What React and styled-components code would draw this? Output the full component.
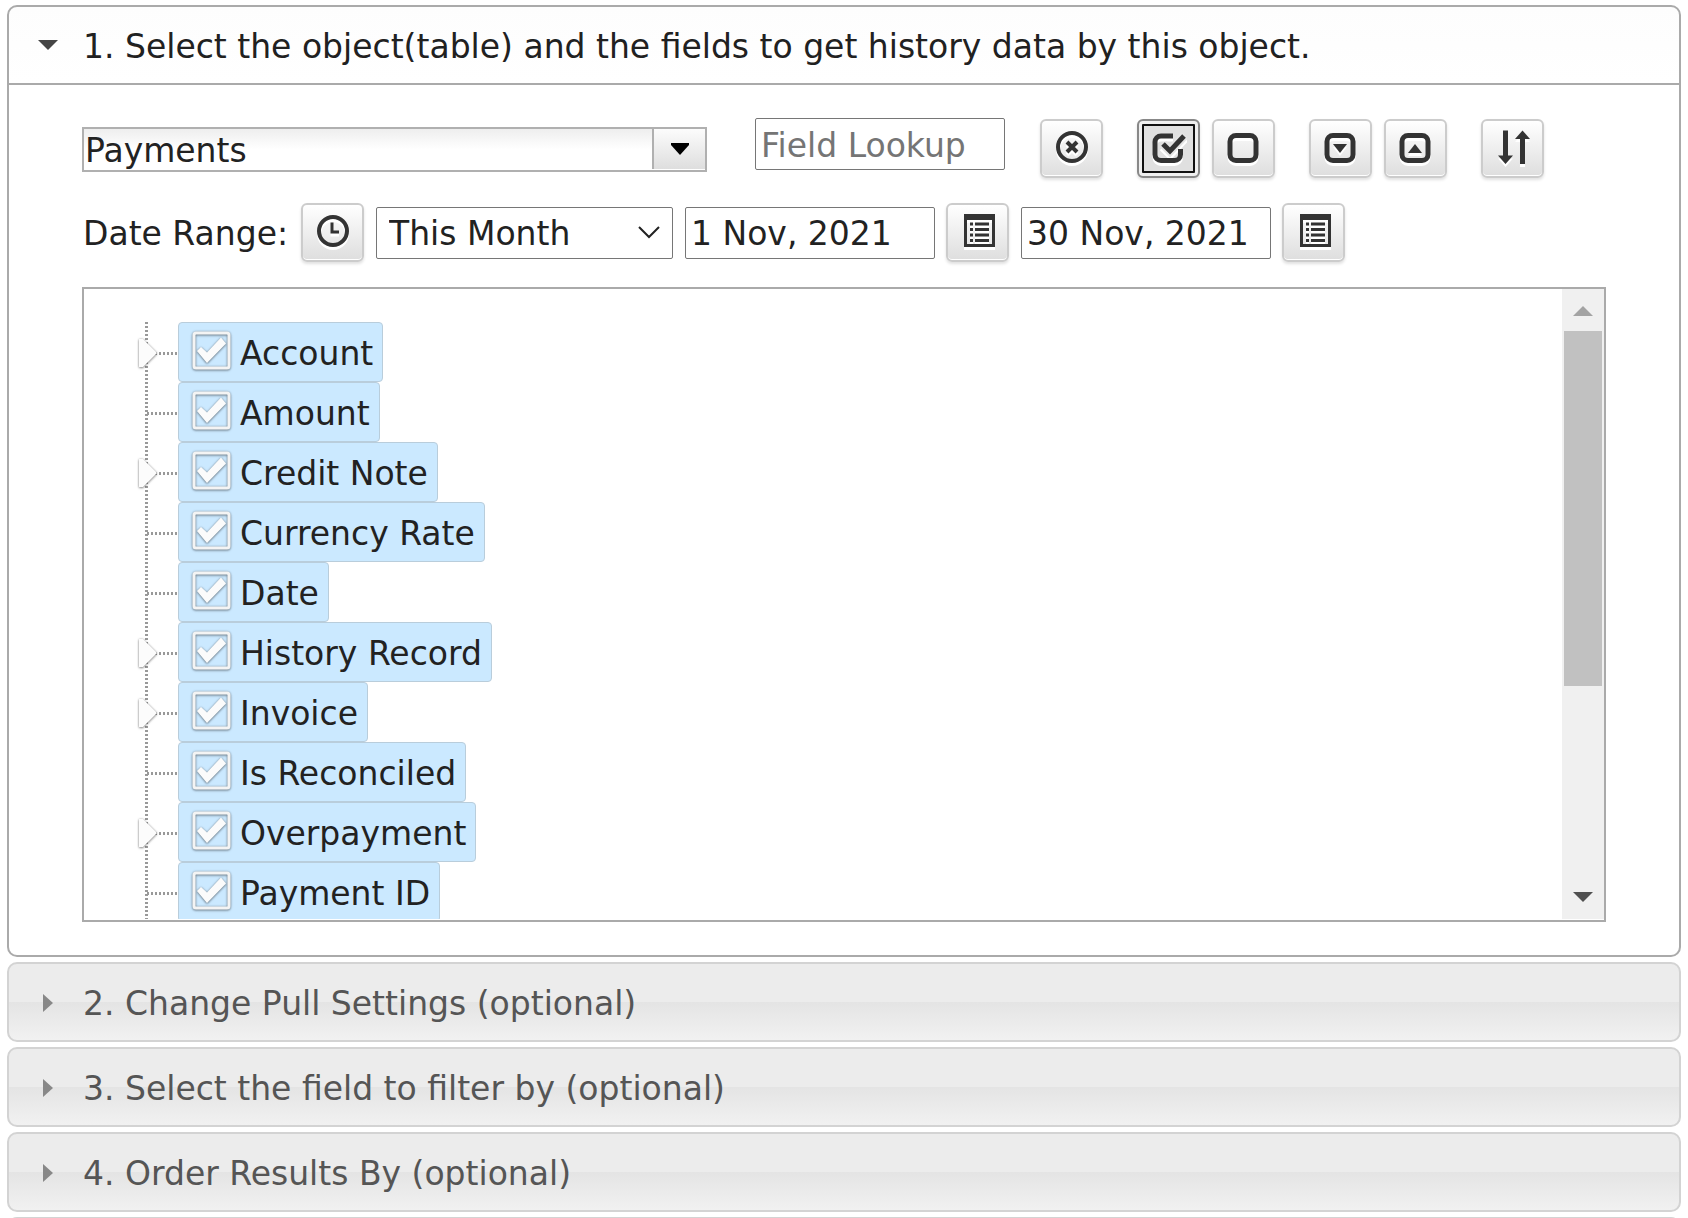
import { useState } from 'react';
import styled, { createGlobalStyle } from 'styled-components';

const FIELDS = [
    { name: 'Account', children: true },
    { name: 'Amount' },
    { name: 'Credit Note', children: true },
    { name: 'Currency Rate' },
    { name: 'Date' },
    { name: 'History Record', children: true },
    { name: 'Invoice', children: true },
    { name: 'Is Reconciled' },
    { name: 'Overpayment', children: true },
    { name: 'Payment ID' },
];

const SECTIONS = [
    '2. Change Pull Settings (optional)',
    '3. Select the field to filter by (optional)',
    '4. Order Results By (optional)',
];

function BoxOutline(){
    return <rect x="4" y="6.5" width="26" height="25" rx="6" fill="none" stroke="#333" strokeWidth="5"/>;
}

const icons = {
    clear: (
        <>
            <circle cx="18" cy="18" r="14" fill="none" stroke="#333" strokeWidth="4"/>
            <path d="M13 13l10 10M23 13l-10 10" stroke="#333" strokeWidth="4"/>
        </>
    ),
    checkAll: (
        <>
            <path d="M22 7H10a6 6 0 0 0-6 6v12.500a6 6 0 0 0 6 6h13.500a6 6 0 0 0 6-6V20" fill="none" stroke="#333" strokeWidth="5"/>
            <path d="M12 15l7 7L34 6" fill="none" stroke="#e4e4e4" strokeWidth="9"/>
            <path d="M12 15l7 7L33 7" fill="none" stroke="#333" strokeWidth="5"/>
        </>
    ),
    uncheckAll: <BoxOutline/>,
    expand: (
        <>
            <BoxOutline/>
            <path d="M10 15h14l-7 9z" fill="#333"/>
        </>
    ),
    collapse: (
        <>
            <BoxOutline/>
            <path d="M10 24h14l-7-9z" fill="#333"/>
        </>
    ),
    sort: (
        <>
            <path d="M8 1.500h5v25h5l-7.500 8.500L3 26.500h5z" fill="#333"/>
            <path d="M25 35h5V10h5l-7.500-8.500L20 10h5z" fill="#333"/>
        </>
    ),
    clock: (
        <>
            <circle cx="18" cy="18" r="14" fill="none" stroke="#333" strokeWidth="4"/>
            <path d="M17 9.500V19h7" fill="none" stroke="#333" strokeWidth="3"/>
        </>
    ),
    calendar: (
        <>
            <path fillRule="evenodd" d="M4 1h31v33H4zM7 7v24h25V7z" fill="#333"/>
            <path d="M10 11h3M10 16.500h3M10 22h3M10 27.500h3M15 11h14M15 16.500h14M15 22h14M15 27.500h14" stroke="#333" strokeWidth="3"/>
        </>
    ),
};

function ToolButton({ icon, label, active }){
    return (
        <IconButton type="button" aria-label={label} $active={active}>
            <svg width="36" height="36" viewBox="0 0 36 36">{icons[icon]}</svg>
        </IconButton>
    );
}

function CheckIcon(){
    return (
        <SoftIcon width="42" height="42" viewBox="0 0 42 42">
            <rect x="3" y="3" width="35" height="35" rx="2" fill="none" stroke="#f4f4f4" strokeWidth="3"/>
            <path d="M6 21l4-4 6 5.500L30 7.500l5 6-19 19.500z" fill="#fbfbfb"/>
        </SoftIcon>
    );
}

function TreeItem({ field }){
    const [checked, setChecked] = useState(true);

    return (
        <Item>
            <Branch>
                {field.children &&
                    <Toggle type="button" aria-label={`Expand ${field.name}`}>
                        <SoftIcon width="20" height="32" viewBox="0 0 20 32">
                            <path d="M0 2h4l14 14L4 30H0z" fill="#fcfcfc"/>
                        </SoftIcon>
                    </Toggle>
                }
            </Branch>
            <Node $selected={checked}>
                <HiddenCheck type="checkbox" checked={checked} onChange={() => setChecked(!checked)}/>
                <CheckIcon/>
                <span>{field.name}</span>
            </Node>
        </Item>
    );
}

function DateField({ label, value }){
    return (
        <DateGroup>
            <TextInput aria-label={label} defaultValue={value}/>
            <ToolButton icon="calendar" label={`Pick ${label}`}/>
        </DateGroup>
    );
}

export default function App(){
    return (
        <>
            <GlobalStyle/>
            <Accordion>
                <Panel>
                    <PanelHeader type="button" aria-expanded="true" $open>
                        <Marker>
                            <svg width="20" height="12" viewBox="0 0 20 12"><path d="M0 0h20L10 10z" fill="#454545"/></svg>
                        </Marker>
                        1. Select the object(table) and the fields to get history data by this object.
                    </PanelHeader>
                    <PanelBody>
                        <Toolbar>
                            <Combo>
                                <ComboSelect aria-label="Object" defaultValue="Payments">
                                    <option>Payments</option>
                                </ComboSelect>
                                <ComboTrigger>
                                    <svg width="18" height="12" viewBox="0 0 18 12"><path d="M0 0h18v2l-9 10L0 2z" fill="#000"/></svg>
                                </ComboTrigger>
                            </Combo>
                            <TextInput type="text" aria-label="Field Lookup" placeholder="Field Lookup"/>
                            <ButtonGroups>
                                <ButtonGroup>
                                    <ToolButton icon="clear" label="Clear lookup"/>
                                </ButtonGroup>
                                <ButtonGroup>
                                    <ToolButton icon="checkAll" label="Check all" active/>
                                    <ToolButton icon="uncheckAll" label="Uncheck all"/>
                                </ButtonGroup>
                                <ButtonGroup>
                                    <ToolButton icon="expand" label="Expand all"/>
                                    <ToolButton icon="collapse" label="Collapse all"/>
                                </ButtonGroup>
                                <ButtonGroup>
                                    <ToolButton icon="sort" label="Sort fields"/>
                                </ButtonGroup>
                            </ButtonGroups>
                        </Toolbar>
                        <DateBar>
                            <RangeLabel htmlFor="range">Date Range:</RangeLabel>
                            <ToolButton icon="clock" label="Date range type"/>
                            <RangeBox>
                                <RangeSelect id="range" defaultValue="This Month">
                                    <option>This Month</option>
                                </RangeSelect>
                                <Chevron width="22" height="14" viewBox="0 0 22 14">
                                    <path d="M1 1l10 10L21 1" fill="none" stroke="#222" strokeWidth="2"/>
                                </Chevron>
                            </RangeBox>
                            <DateField label="start date" value="1 Nov, 2021"/>
                            <DateField label="end date" value="30 Nov, 2021"/>
                        </DateBar>
                        <TreeBox>
                            <Tree>
                                {FIELDS.map((field) => <TreeItem field={field} key={field.name}/>)}
                            </Tree>
                            <Scrollbar>
                                <ScrollButton type="button" aria-label="Scroll up">
                                    <svg width="20" height="10" viewBox="0 0 20 10"><path d="M0 10L10 0l10 10z" fill="#a3a3a3"/></svg>
                                </ScrollButton>
                                <Track><Thumb/></Track>
                                <ScrollButton type="button" aria-label="Scroll down" $down>
                                    <svg width="20" height="10" viewBox="0 0 20 10"><path d="M0 0h20L10 10z" fill="#505050"/></svg>
                                </ScrollButton>
                            </Scrollbar>
                        </TreeBox>
                    </PanelBody>
                </Panel>
                {SECTIONS.map((title) => (
                    <PanelHeader type="button" aria-expanded="false" key={title}>
                        <Marker>
                            <svg width="12" height="18" viewBox="0 0 12 18"><path d="M1 0l10 9L1 18z" fill="#888"/></svg>
                        </Marker>
                        {title}
                    </PanelHeader>
                ))}
                <PanelHeader as="div"/>
            </Accordion>
        </>
    );
}

const GlobalStyle = createGlobalStyle`
    * {
        box-sizing: border-box;
    }

    body {
        margin: 0;
        background: #fff;
    }

    body, button, input, select {
        font-family: Verdana, 'DejaVu Sans', sans-serif;
        font-size: 33px;
        color: #222;
    }
`;

const Accordion = styled.div`
    display: flex;
    flex-direction: column;
    gap: 5px;
    height: 100vh;
    padding: 5px 7px 0;
    overflow: hidden;
`;

const Panel = styled.section`
    display: flex;
    flex-direction: column;
    flex-shrink: 0;
`;

const PanelHeader = styled.button`
    display: flex;
    align-items: center;
    flex-shrink: 0;
    width: 100%;
    height: 80px;
    padding: 2px 0 0;
    border: 2px solid ${({ $open }) => $open ? '#aaa' : '#d3d3d3'};
    border-radius: ${({ $open }) => $open ? '10px 10px 0 0' : '10px'};
    background: ${({ $open }) => $open
        ? 'linear-gradient(#fdfdfd, #fff)'
        : 'linear-gradient(#ececec 50%, #e4e4e4 50%, #f1f1f1)'};
    color: ${({ $open }) => $open ? '#212121' : '#555'};
    text-align: left;
    white-space: nowrap;
    cursor: pointer;
`;

const Marker = styled.span`
    display: flex;
    justify-content: center;
    width: 74px;
    padding-left: 4px;
`;

const PanelBody = styled.div`
    display: flex;
    flex-direction: column;
    gap: 25px;
    padding: 33px 73px;
    border: 2px solid #aaa;
    border-top: 0;
    border-radius: 0 0 10px 10px;
`;

const Toolbar = styled.div`
    display: flex;
    align-items: flex-start;
`;

const Combo = styled.div`
    display: grid;
    grid-template-columns: 1fr 53px;
    width: 625px;
    height: 45px;
    margin: 9px 48px 0 0;
    border: 2px solid #b0b0b0;
    background: linear-gradient(#eee, #fff 50%);
`;

const ComboSelect = styled.select`
    grid-area: 1 / 1 / 2 / 3;
    appearance: none;
    height: 41px;
    padding: 2px 0 0 1px;
    border: 0;
    background: transparent;
`;

const ComboTrigger = styled.span`
    grid-area: 1 / 2 / 2 / 3;
    display: flex;
    align-items: center;
    justify-content: center;
    margin-bottom: 1px;
    border-left: 2px solid #b0b0b0;
    background: linear-gradient(#fcfcfc, #dedede);
    pointer-events: none;
`;

const TextInput = styled.input`
    width: 250px;
    height: 52px;
    padding: 2px 5px 0;
    border: 1px solid #767676;
    border-radius: 2px;
    background: #fff;

    &::placeholder {
        color: #757575;
    }
`;

const ButtonGroups = styled.div`
    display: flex;
    gap: 34px;
    margin: 1px 0 0 35px;
`;

const ButtonGroup = styled.div`
    display: flex;
    gap: 12px;
`;

const IconButton = styled.button`
    display: flex;
    align-items: center;
    justify-content: center;
    width: 63px;
    height: 59px;
    padding: 0 0 4px;
    border: 2px solid ${({ $active }) => $active ? '#888' : '#ccc'};
    border-radius: 6px;
    outline: ${({ $active }) => $active ? '2px solid #101010' : 'none'};
    outline-offset: -7px;
    background: ${({ $active }) => $active ? '#e0e0e0' : 'linear-gradient(#fff, #dedede)'};
    box-shadow: ${({ $active }) => $active ? 'inset 0 0 0 3px #efefef' : 'inset 0 -1px 0 #fff'}, 0 2px 3px rgba(0, 0, 0, 0.12);
    cursor: pointer;

    svg {
        filter: drop-shadow(0 3px 0 #fff);
    }
`;

const DateBar = styled.div`
    display: flex;
    align-items: center;
    gap: 12px;
`;

const RangeLabel = styled.label`
    width: 207px;
    padding: 2px 0 0 1px;
    white-space: nowrap;
`;

const RangeBox = styled.div`
    display: grid;
    align-items: center;
    width: 297px;
`;

const RangeSelect = styled.select`
    grid-area: 1 / 1;
    appearance: none;
    width: 100%;
    height: 52px;
    padding: 2px 12px 0;
    border: 1px solid #767676;
    border-radius: 2px;
    background: #fff;
`;

const Chevron = styled.svg`
    grid-area: 1 / 1;
    justify-self: end;
    margin-right: 13px;
    pointer-events: none;
`;

const DateGroup = styled.div`
    display: flex;
    align-items: center;
    gap: 11px;
`;

const TreeBox = styled.div`
    display: flex;
    height: 635px;
    padding-bottom: 1px;
    border: 2px solid #aaa;
`;

const Tree = styled.ul`
    flex: 1;
    margin: 0;
    padding: 33px 0 0 55px;
    overflow: hidden;
    list-style: none;
`;

const Item = styled.li`
    display: flex;
    height: 60px;
`;

/* dotted connectors between the nodes */
const Branch = styled.div`
    display: flex;
    align-items: center;
    width: 39px;
    background:
        repeating-linear-gradient(#999 0 2px, transparent 2px 4px) 6px 0 / 3px 100% no-repeat,
        repeating-linear-gradient(90deg, #999 0 2px, transparent 2px 4px) 8px 30px / 31px 3px no-repeat;
`;

const Toggle = styled.button`
    display: flex;
    padding: 2px 0 0;
    border: 0;
    background: none;
    cursor: pointer;
`;

const SoftIcon = styled.svg`
    overflow: visible;
    filter: drop-shadow(0 1px 1px rgba(0, 0, 0, 0.35)) drop-shadow(0 0 1px rgba(0, 0, 0, 0.25));
`;

const Node = styled.label`
    display: flex;
    align-items: center;
    gap: 7px;
    padding: 2px 9px 0 12px;
    border: 1px solid ${({ $selected }) => $selected ? '#b9cddb' : 'transparent'};
    border-radius: 4px;
    background: ${({ $selected }) => $selected ? '#cbe9ff' : 'none'};
    white-space: nowrap;

    svg {
        margin-bottom: 4px;
    }
`;

const HiddenCheck = styled.input`
    position: absolute;
    opacity: 0;
    pointer-events: none;
`;

const Scrollbar = styled.div`
    display: flex;
    flex-direction: column;
    width: 42px;
    background: #f0f0f0;
`;

const ScrollButton = styled.button`
    display: flex;
    align-items: center;
    justify-content: center;
    height: 42px;
    padding: ${({ $down }) => $down ? '0 0 2px' : '2px 0 0'};
    border: 0;
    background: none;
`;

const Track = styled.div`
    flex: 1;
    padding: 0 2px;
`;

const Thumb = styled.div`
    height: 65%;
    background: #c1c1c1;
`;
